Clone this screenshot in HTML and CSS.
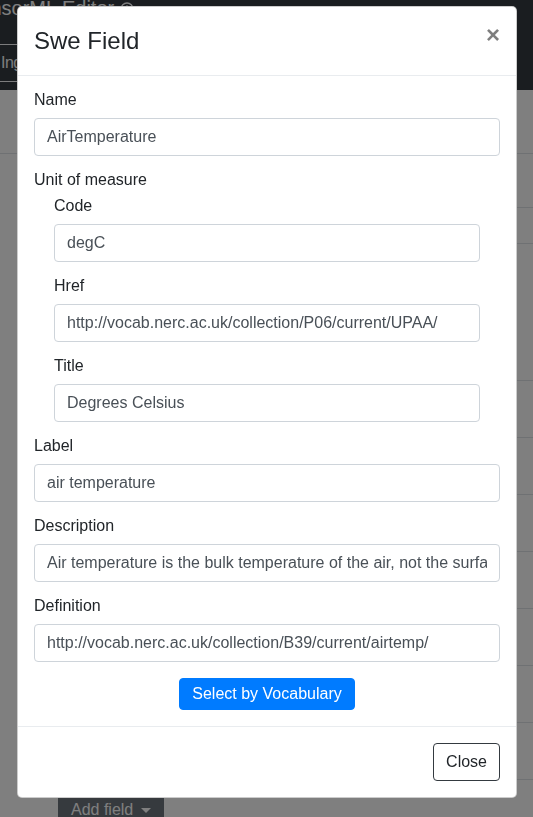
FILE: index.html
```html
<!DOCTYPE html>
<html lang="en">
<head>
<meta charset="utf-8">
<title>SensorML Editor</title>
<link rel="stylesheet" href="styles.css">
</head>
<body>
<div class="page">
  <header class="navbar">
    <div class="brand">SensorML Editor <svg class="info" viewBox="0 0 14 14" width="14" height="14" aria-hidden="true"><circle cx="7" cy="7" r="6" fill="none" stroke="currentColor" stroke-width="1.3"/><circle cx="7" cy="4.2" r="0.9" fill="currentColor"/><rect x="6.25" y="6" width="1.5" height="4.6" fill="currentColor"/></svg></div>
    <button class="btn nav-btn">Ingest</button>
  </header>
  <main class="content">
    <div class="toolbar"></div>
    <div class="rows">
      <div class="row row-a"></div>
      <div class="row row-b"></div>
      <div class="row row-c"></div>
      <div class="row"></div>
      <div class="row"></div>
      <div class="row"></div>
      <div class="row"></div>
      <div class="row"></div>
      <div class="row"></div>
      <div class="row"></div>
    </div>
    <button class="btn add-btn">Add field <span class="caret"></span></button>
  </main>
</div>

<div class="backdrop"></div>

<div class="modal">
  <div class="dialog">
    <div class="mheader">
      <h4 class="mtitle">Swe Field</h4>
      <button class="close" aria-label="Close">×</button>
    </div>
    <div class="mbody">
      <div class="group">
        <label class="flabel">Name</label>
        <input class="control" type="text" value="AirTemperature">
      </div>
      <div class="group-plain">
        <label class="flabel uom">Unit of measure</label>
        <div class="nested">
          <div class="group">
            <label class="flabel">Code</label>
            <input class="control" type="text" value="degC">
          </div>
          <div class="group">
            <label class="flabel">Href</label>
            <input class="control" type="text" value="http://vocab.nerc.ac.uk/collection/P06/current/UPAA/">
          </div>
          <div class="group">
            <label class="flabel">Title</label>
            <input class="control" type="text" value="Degrees Celsius">
          </div>
        </div>
      </div>
      <div class="group">
        <label class="flabel">Label</label>
        <input class="control" type="text" value="air temperature">
      </div>
      <div class="group">
        <label class="flabel">Description</label>
        <input class="control" type="text" value="Air temperature is the bulk temperature of the air, not the surface (skin) temperature.">
      </div>
      <div class="group">
        <label class="flabel">Definition</label>
        <input class="control" type="text" value="http://vocab.nerc.ac.uk/collection/B39/current/airtemp/">
      </div>
      <div class="actions">
        <button class="btn btn-primary">Select by Vocabulary</button>
      </div>
    </div>
    <div class="mfooter">
      <button class="btn btn-outline">Close</button>
    </div>
  </div>
</div>
</body>
</html>
```

FILE: styles.css
```css
* { box-sizing: border-box; }

html, body {
  margin: 0;
  height: 100%;
}

body {
  font-family: "Liberation Sans", Arial, sans-serif;
  font-size: 16px;
  line-height: 1.5;
  color: #212529;
  background: #fff;
  overflow: hidden;
}

.btn {
  font-family: inherit;
  font-size: 16px;
  line-height: 24px;
  padding: 6px 12px;
  border: 1px solid transparent;
  border-radius: 4px;
  background: transparent;
  cursor: pointer;
  white-space: nowrap;
}

/* ---------- underlying page ---------- */
.navbar {
  background: #343a40;
  height: 90px;
  padding-bottom: 8px;
  display: flex;
  flex-direction: column;
  align-items: flex-start;
}

.brand {
  margin: -7px 0 21px -34px;
  font-size: 20px;
  line-height: 30px;
  color: #fff;
  white-space: nowrap;
  display: flex;
  align-items: center;
  gap: 6px;
}

.brand .info { margin-top: 1px; }

.nav-btn {
  margin-left: -12px;
  color: #f8f9fa;
  border-color: #f8f9fa;
  width: 90px;
  text-align: left;
  letter-spacing: -0.5px;
}

.content {
  background: #fff;
}

.toolbar {
  height: 64px;
  border-bottom: 1px solid #dee2e6;
}

.rows {
  margin-left: 40px;
}

.row {
  height: 57px;
  border-bottom: 1px solid #dee2e6;
}

.row-a { height: 54px; }
.row-b { height: 36px; }
.row-c { height: 137px; }

.add-btn {
  margin: 11px 0 0 58px;
  background: #6c757d;
  border-color: #6c757d;
  color: #fff;
  display: inline-flex;
  align-items: center;
}

.caret {
  display: inline-block;
  margin-left: 8px;
  border-top: 5px solid #fff;
  border-left: 5px solid transparent;
  border-right: 5px solid transparent;
}

/* ---------- backdrop + modal ---------- */
.backdrop {
  position: fixed;
  inset: 0;
  background: rgba(0, 0, 0, 0.5);
}

.modal {
  position: fixed;
  inset: 0;
  padding-top: 6px;
}

.dialog {
  width: 500px;
  margin-left: 17px;
  background: #fff;
  border: 1px solid rgba(0, 0, 0, 0.2);
  border-radius: 5px;
  display: flex;
  flex-direction: column;
}

.mheader {
  display: flex;
  align-items: flex-start;
  padding: 16px;
  border-bottom: 1px solid #e9ecef;
}

.mtitle {
  margin: 0;
  font-size: 24px;
  line-height: 36px;
  font-weight: 500;
  color: #212529;
}

.close {
  margin: -16px -16px -16px auto;
  padding: 16px;
  border: 0;
  background: transparent;
  font-family: inherit;
  font-size: 24px;
  font-weight: 700;
  line-height: 24px;
  color: #000;
  opacity: 0.5;
  cursor: pointer;
}

.mbody {
  padding: 12px 16px 16px;
  display: flex;
  flex-direction: column;
}

.group {
  display: flex;
  flex-direction: column;
  margin-bottom: 12px;
}

.group-plain {
  display: flex;
  flex-direction: column;
}

.flabel {
  display: block;
  line-height: 24px;
  margin-bottom: 6px;
  color: #212529;
}

.flabel.uom { margin-bottom: 2px; }

.nested {
  padding: 0 20px;
}

.control {
  display: block;
  width: 100%;
  height: 38px;
  padding: 6px 12px;
  font-family: inherit;
  font-size: 16px;
  line-height: 24px;
  color: #495057;
  background: #fff;
  border: 1px solid #ced4da;
  border-radius: 4px;
  outline: none;
}

.actions {
  display: flex;
  justify-content: center;
  margin-top: 4px;
}

.btn-primary {
  background: #007bff;
  border-color: #007bff;
  color: #fff;
  padding: 3px 12px;
}

.mfooter {
  display: flex;
  justify-content: flex-end;
  padding: 16px;
  border-top: 1px solid #e9ecef;
}

.btn-outline {
  color: #212529;
  border-color: #343a40;
  background: #fff;
}
```
